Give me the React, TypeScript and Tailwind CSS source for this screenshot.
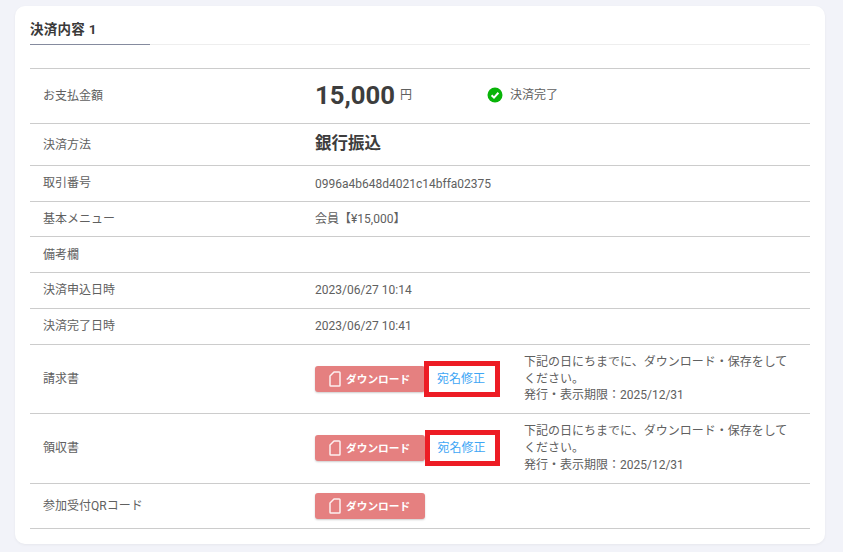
// Payment details card (決済内容)

const FONT = "font-['Roboto','Noto_Sans_CJK_JP',sans-serif]";

const FileIcon: React.FC = () => (
  <svg width="12" height="16" viewBox="0 0 12 16" fill="none" className="shrink-0">
    <path
      d="M5 1H10.2C10.7 1 11 1.3 11 1.8V14.2C11 14.7 10.7 15 10.2 15H1.8C1.3 15 1 14.7 1 14.2V5L5 1Z"
      stroke="#fdf0f0"
      strokeWidth="1.5"
      strokeLinejoin="round"
    />
  </svg>
);

const CheckIcon: React.FC = () => (
  <svg width="16" height="16" viewBox="0 0 16 16" className="shrink-0">
    <circle cx="8" cy="8" r="7.5" fill="#08b408" />
    <path d="M4.6 8.2L7 10.6L11.4 5.8" fill="none" stroke="white" strokeWidth="2" />
  </svg>
);

const DownloadButton: React.FC<{ className?: string }> = ({ className = '' }) => (
  <button className={`flex h-[26px] w-[110px] items-center gap-[5px] rounded-[3px] bg-[#e58080] pl-[14px] text-[10.7px] font-bold text-white shadow-[0_1px_2px_rgba(0,0,0,0.2)] ${className}`}>
    <FileIcon />
    <span className="pt-[2px]">ダウンロード</span>
  </button>
);

const Row: React.FC<{
  label: string;
  height: string;
  labelClass?: string;
  valueClass?: string;
  children?: React.ReactNode;
}> = ({ label, height, labelClass = '', valueClass = '', children }) => (
  <div className={`flex items-center border-b border-[#cccccc] ${height}`}>
    <div className={`w-[285px] shrink-0 pl-[13px] text-[12px] text-[#606060] ${labelClass}`}>{label}</div>
    <div className={`flex min-w-0 flex-1 items-center text-[12px] text-[#606060] ${valueClass}`}>{children}</div>
  </div>
);

const ReceiptActions: React.FC<{ boxClass: string; buttonClass?: string }> = ({ boxClass, buttonClass }) => (
  <>
    <DownloadButton className={buttonClass} />
    <a className={`flex h-[36px] items-center justify-center border-[5px] border-[#ed1c24] pr-[2px] text-[12px] text-[#3ea6f5] ${boxClass}`}>
      宛名修正
    </a>
    <p className="ml-[24px] w-[270px] text-[12px] leading-[16.8px] text-[#606060]">
      下記の日にちまでに、ダウンロード・保存をしてください。
      <br />
      発行・表示期限：2025/12/31
    </p>
  </>
);

export default function App() {
  return (
    <div className={`${FONT} h-[552px] w-[843px] overflow-hidden bg-[#f2f3f9] px-[15px] pt-[6px]`}>
      <div className="h-[538px] w-[810px] rounded-[10px] bg-white px-[15px] pt-[13px] shadow-[0_1px_3px_rgba(0,0,0,0.05)]">
        {/* Section title */}
        <div className="h-[26px] border-b border-[#eeeeee]">
          <div className="h-[26px] w-[120px] border-b border-[#858b9e] text-[13.5px] leading-[20px] font-bold tracking-[0.02em] text-[#3a3a3a]">
            決済内容 1
          </div>
        </div>

        {/* Detail rows */}
        <div className="mt-[23px] border-t border-[#cccccc]">
          <Row label="お支払金額" height="h-[55px]" labelClass="pb-px">
            <span className="text-[25.7px] leading-none font-bold text-[#3d3d3d]">15,000</span>
            <span className="ml-[5px] pb-px text-[12px]">円</span>
            <span className="ml-[75px] flex items-center gap-[8px] pb-px">
              <CheckIcon />
              <span className="-ml-px">決済完了</span>
            </span>
          </Row>
          <Row label="決済方法" height="h-[42px]">
            <span className="text-[16.5px] font-bold text-[#3d3d3d]">銀行振込</span>
          </Row>
          <Row label="取引番号" height="h-[36px]" labelClass="pb-px">0996a4b648d4021c14bffa02375</Row>
          <Row label="基本メニュー" height="h-[35px]">会員【¥15,000】</Row>
          <Row label="備考欄" height="h-[36px]" />
          <Row label="決済申込日時" height="h-[36px]" labelClass="pb-px" valueClass="pb-px">2023/06/27 10:14</Row>
          <Row label="決済完了日時" height="h-[36px]" labelClass="pb-px" valueClass="pb-px">2023/06/27 10:41</Row>
          <Row label="請求書" height="h-[69px]">
            <ReceiptActions boxClass="-ml-px w-[76px]" />
          </Row>
          <Row label="領収書" height="h-[70px]" labelClass="pb-px">
            <ReceiptActions boxClass="w-[75px]" buttonClass="-mt-px" />
          </Row>
          <Row label="参加受付QRコード" height="h-[45px]" labelClass="pb-px">
            <DownloadButton />
          </Row>
        </div>
      </div>
    </div>
  );
}
